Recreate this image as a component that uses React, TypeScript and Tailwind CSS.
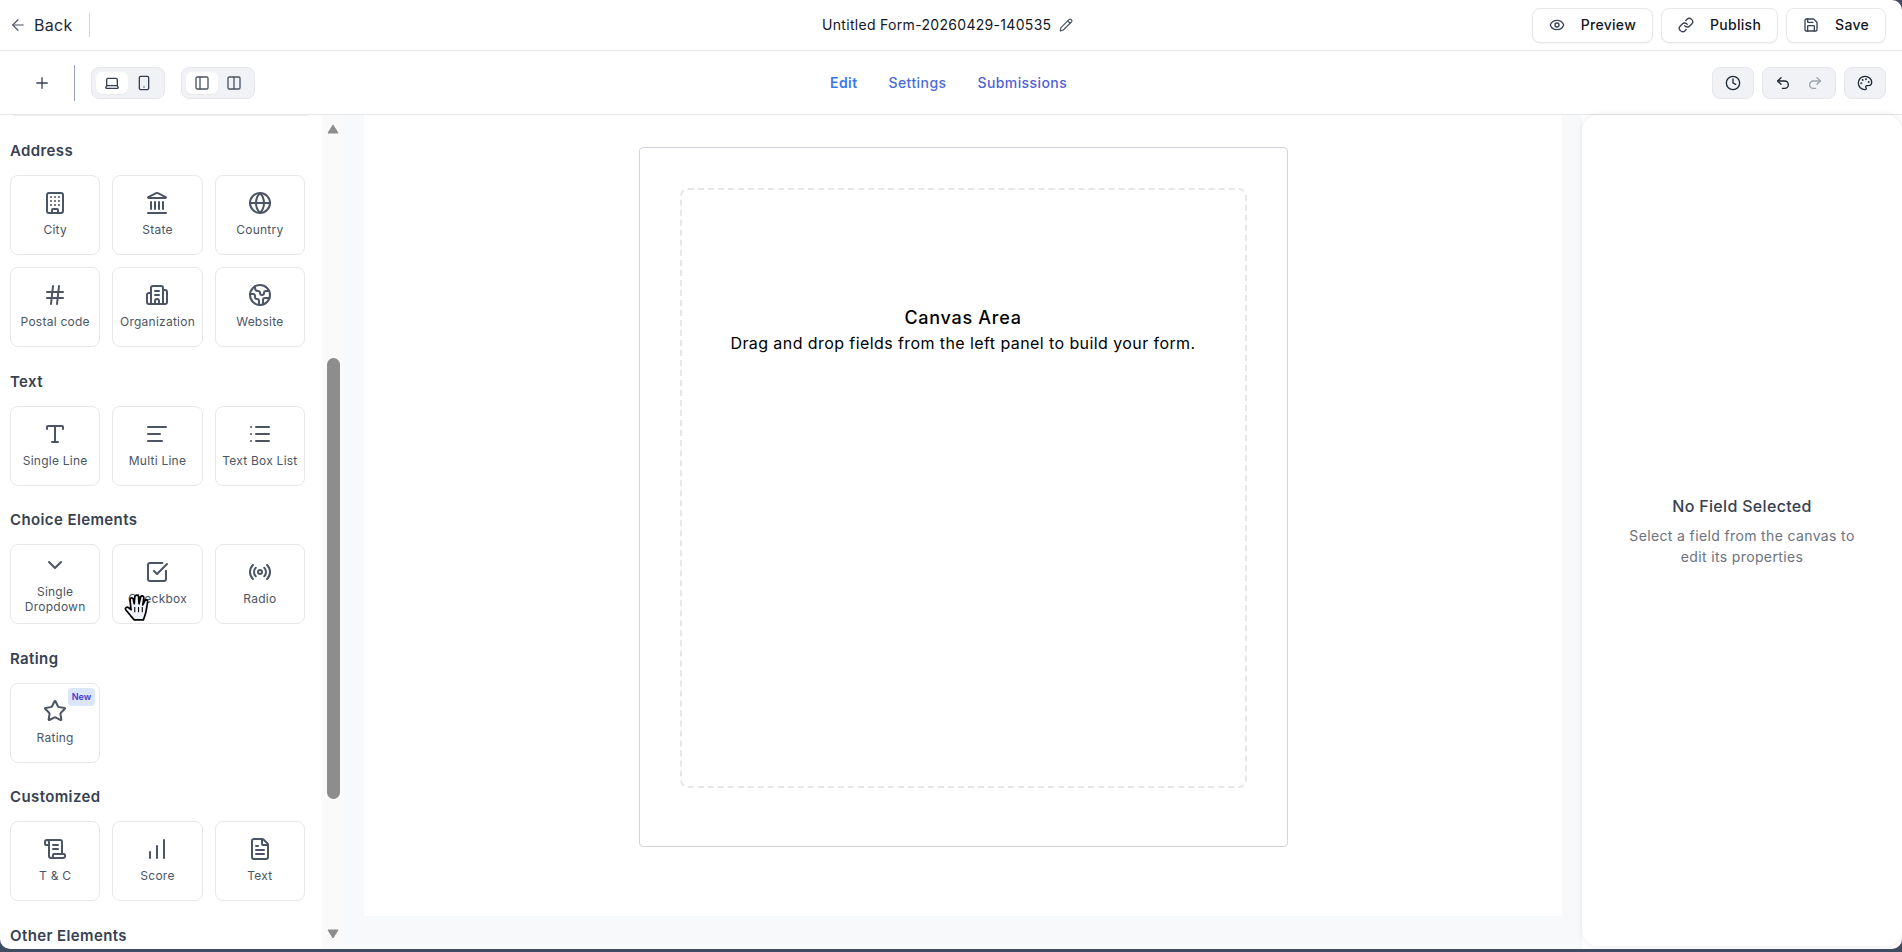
import {
  ArrowLeft,
  Building,
  Building2,
  ChartNoAxesColumnIncreasing,
  ChevronDown,
  Clock,
  Columns2,
  Earth,
  Eye,
  FileText,
  Globe,
  Hash,
  Landmark,
  Laptop,
  Link,
  List,
  Palette,
  PanelLeft,
  Pencil,
  Plus,
  Radio,
  Redo2,
  Save,
  ScrollText,
  Smartphone,
  SquareCheckBig,
  Star,
  Text,
  Type,
  Undo2,
} from 'lucide-react';
import type { ComponentType } from 'react';

type Field = {
  label: string;
  icon: ComponentType<{ size?: number; strokeWidth?: number; className?: string }>;
  badge?: boolean;
};

const sections: Array<{ title: string; fields: Array<Field> }> = [
  {
    title: 'Address',
    fields: [
      { label: 'City', icon: Building },
      { label: 'State', icon: Landmark },
      { label: 'Country', icon: Globe },
      { label: 'Postal code', icon: Hash },
      { label: 'Organization', icon: Building2 },
      { label: 'Website', icon: Earth },
    ],
  },
  {
    title: 'Text',
    fields: [
      { label: 'Single Line', icon: Type },
      { label: 'Multi Line', icon: Text },
      { label: 'Text Box List', icon: List },
    ],
  },
  {
    title: 'Choice Elements',
    fields: [
      { label: 'Single Dropdown', icon: ChevronDown },
      { label: 'Checkbox', icon: SquareCheckBig },
      { label: 'Radio', icon: Radio },
    ],
  },
  {
    title: 'Rating',
    fields: [{ label: 'Rating', icon: Star, badge: true }],
  },
  {
    title: 'Customized',
    fields: [
      { label: 'T & C', icon: ScrollText },
      { label: 'Score', icon: ChartNoAxesColumnIncreasing },
      { label: 'Text', icon: FileText },
    ],
  },
];

function FieldCard({ field }: { field: Field }) {
  const Icon = field.icon;
  return (
    <div className="relative flex h-[80px] flex-col items-center justify-center gap-[7px] rounded-[8px] border border-[#e5e7eb] bg-white pb-[2px]">
      {field.badge && (
        <span className="absolute right-[4px] top-[4px] rounded-[4px] bg-[#dbe6fd] px-[4px] text-[9px] font-semibold leading-[18px] text-[#4338ca]">
          New
        </span>
      )}
      <Icon size={24} strokeWidth={2} className="shrink-0 text-[#4b5563]" />
      <span className="px-1 text-center text-[12px] leading-[15px] tracking-[0.02em] text-[#4b5563]">
        {field.label}
      </span>
    </div>
  );
}

function TopButton({ label, icon: Icon }: { label: string; icon: Field['icon'] }) {
  return (
    <button
      type="button"
      className="flex h-[35px] items-center gap-[16px] rounded-[8px] border border-[#e5e7eb] bg-white pl-[16px] pr-[16px] text-[14px] font-medium tracking-[0.02em] text-[#111827] shadow-[0_1px_2px_rgba(0,0,0,0.05)]"
    >
      <Icon size={16} strokeWidth={2} className="text-[#374151]" />
      <span className="mb-[1px]">{label}</span>
    </button>
  );
}

function HandCursor() {
  return (
    <svg
      viewBox="0 0 28 28"
      className="absolute left-[123px] top-[477px] h-[30px] w-[30px]"
    >
      <path
        d="M7 22 L2.5 16.5 C1.5 15 3.5 13.5 5 14.5 L7.5 16.5 L6.5 7 C6.5 5 9 5 9.5 6.5 L10.5 11 L11 4.5 C11.5 2.5 14 2.5 14.5 4 L15 11 L16.5 4.5 C17 3 19.5 3.5 19.5 5.5 L18.5 12 L20.5 8 C21.5 6.5 23.5 7.5 23 9.5 L21.5 18 C21 21 20 23 19 26 L10.5 26 Z"
        fill="#eef3fb"
        stroke="#000"
        strokeWidth="1.6"
        strokeLinejoin="round"
      />
      <path d="M11 14v5M14.5 14v5M18 14v5" stroke="#000" strokeWidth="1" />
    </svg>
  );
}

export default function App() {
  return (
    <div className="h-[952px] w-[1902px] overflow-hidden bg-[#3f4b60] [font-family:Inter,'Noto_Sans',sans-serif]">
      <div className="flex h-[949px] flex-col overflow-hidden rounded-b-[10px] rounded-tr-[10px] bg-white">
        {/* Top bar */}
        <header className="flex h-[51px] shrink-0 items-center border-b border-[#e5e7eb] pr-[16px]">
          <div className="flex w-[822px] items-center">
            <ArrowLeft size={18} strokeWidth={1.5} className="ml-[9px] text-[#4b5563]" />
            <span className="mb-[1px] ml-[7px] text-[16px] tracking-[0.02em] text-[#1f2937]">Back</span>
            <div className="ml-[16px] h-[24px] w-px bg-[#d1d5db]" />
          </div>
          <span className="mb-[1px] text-[14px] font-normal tracking-[0.022em] text-[#111827]">
            Untitled Form-20260429-140535
          </span>
          <Pencil size={14} className="mb-[1px] ml-[8px] text-[#4b5563]" />
          <div className="ml-auto flex gap-[8px]">
            <TopButton label="Preview" icon={Eye} />
            <TopButton label="Publish" icon={Link} />
            <TopButton label="Save" icon={Save} />
          </div>
        </header>

        {/* Toolbar */}
        <div className="flex h-[64px] shrink-0 items-center border-b border-[#e5e7eb] pr-[16px]">
          <div className="flex w-[830px] items-center">
            <Plus size={18} strokeWidth={1.75} className="ml-[33px] text-[#374151]" />
            <div className="ml-[23px] h-[36px] w-px bg-[#94a3b8]" />
            <div className="ml-[16px] flex h-[32px] w-[74px] items-center rounded-[8px] border border-[#e5e7eb] bg-[#f1f2f6] pl-[4px]">
              <div className="flex h-[22px] w-[32px] items-center justify-center rounded-[6px] bg-white shadow-[0_1px_1px_rgba(0,0,0,0.04)]">
                <Laptop size={16} className="text-[#374151]" />
              </div>
              <div className="flex w-[32px] justify-center">
                <Smartphone size={16} className="text-[#374151]" />
              </div>
            </div>
            <div className="ml-[16px] flex h-[32px] w-[74px] items-center rounded-[8px] border border-[#e5e7eb] bg-[#f1f2f6] pl-[4px]">
              <div className="flex h-[22px] w-[32px] items-center justify-center rounded-[6px] bg-white shadow-[0_1px_1px_rgba(0,0,0,0.04)]">
                <PanelLeft size={16} className="text-[#4b5563]" />
              </div>
              <div className="flex w-[32px] justify-center">
                <Columns2 size={16} className="text-[#4b5563]" />
              </div>
            </div>
          </div>
          <nav className="flex items-center gap-[31px] text-[14px] font-medium tracking-[0.03em]">
            <span className="font-semibold text-[#3b76ef]">Edit</span>
            <span className="text-[#4a6ddc]">Settings</span>
            <span className="text-[#4f5fd6]">Submissions</span>
          </nav>
          <div className="ml-auto flex gap-[8px]">
            <div className="flex h-[32px] w-[42px] items-center justify-center rounded-[8px] border border-[#e5e7eb] bg-[#f1f2f6]">
              <Clock size={16} className="text-[#1f2937]" />
            </div>
            <div className="flex h-[32px] w-[74px] items-center justify-center gap-[16px] rounded-[8px] border border-[#e5e7eb] bg-[#f1f2f6]">
              <Undo2 size={16} className="text-[#1f2937]" />
              <Redo2 size={16} className="text-[#9ca3af]" />
            </div>
            <div className="flex h-[32px] w-[42px] items-center justify-center rounded-[8px] border border-[#e5e7eb] bg-[#f1f2f6]">
              <Palette size={16} className="text-[#1f2937]" />
            </div>
          </div>
        </div>

        {/* Body */}
        <div className="flex min-h-0 flex-1">
          {/* Field palette */}
          <aside className="relative flex w-[344px] shrink-0">
            <div className="w-[322px] overflow-hidden">
              <div className="mx-[13px] h-px bg-[#eeeff2]" />
              <div className="w-[305px] pl-[10px]">
                {sections.map((section) => (
                  <section key={section.title} className="pt-[22.6px] first:pt-[23px]">
                    <h3 className="mb-[12px] text-[15px] font-semibold leading-[24px] tracking-[0.026em] text-[#374151]">
                      {section.title}
                    </h3>
                    <div className="grid grid-cols-3 gap-[12px]">
                      {section.fields.map((field) => (
                        <FieldCard key={field.label} field={field} />
                      ))}
                    </div>
                  </section>
                ))}
                <section className="pt-[22.6px]">
                  <h3 className="text-[15px] font-semibold leading-[24px] tracking-[0.026em] text-[#374151]">
                    Other Elements
                  </h3>
                </section>
              </div>
            </div>
            {/* Scrollbar */}
            <div className="flex w-[22px] flex-col items-center bg-[#fafafb] pb-[10px] pt-[9px]">
              <svg viewBox="0 0 12 10" className="h-[10px] w-[12px] fill-[#8d8d8d] stroke-[#8d8d8d]">
                <path d="M6 1 L11 9 H1 Z" strokeLinejoin="round" />
              </svg>
              <div className="mt-[224px] h-[441px] w-[13px] rounded-[7px] bg-[#8d8d8d]" />
              <svg viewBox="0 0 12 10" className="mt-auto h-[10px] w-[12px] fill-[#8d8d8d] stroke-[#8d8d8d]">
                <path d="M1 1 H11 L6 9 Z" strokeLinejoin="round" />
              </svg>
            </div>
            <HandCursor />
          </aside>

          {/* Canvas */}
          <main className="flex min-w-0 flex-1 bg-[#f8f9fb]">
            <div className="mx-[20px] mb-[33px] flex-1 bg-white pt-[32px]">
              <div className="mx-auto h-[700px] w-[649px] rounded-[4px] border border-[#d1d5db] bg-white px-[40px] pb-[58px] pt-[40px]">
                <div className="flex h-full flex-col items-center rounded-[8px] border-2 border-dashed border-[#e5e7eb] pt-[115px]">
                  <h2 className="text-[18px] font-medium leading-[26px] tracking-[0.04em] text-black">
                    Canvas Area
                  </h2>
                  <p className="text-[16px] leading-[24px] tracking-[0.026em] text-black">
                    Drag and drop fields from the left panel to build your form.
                  </p>
                </div>
              </div>
            </div>
          </main>

          {/* Properties */}
          <aside className="mb-[3px] flex w-[320px] shrink-0 flex-col items-center justify-center rounded-[16px] bg-white pb-[1px] shadow-[0_0_6px_rgba(0,0,0,0.1)]">
            <h3 className="text-[16px] font-medium leading-[24px] tracking-[0.02em] text-[#374151]">
              No Field Selected
            </h3>
            <p className="mt-[7px] w-[250px] text-center text-[14px] leading-[21px] tracking-[0.026em] text-[#6b7280]">
              Select a field from the canvas to edit its properties
            </p>
          </aside>
        </div>
      </div>
    </div>
  );
}
